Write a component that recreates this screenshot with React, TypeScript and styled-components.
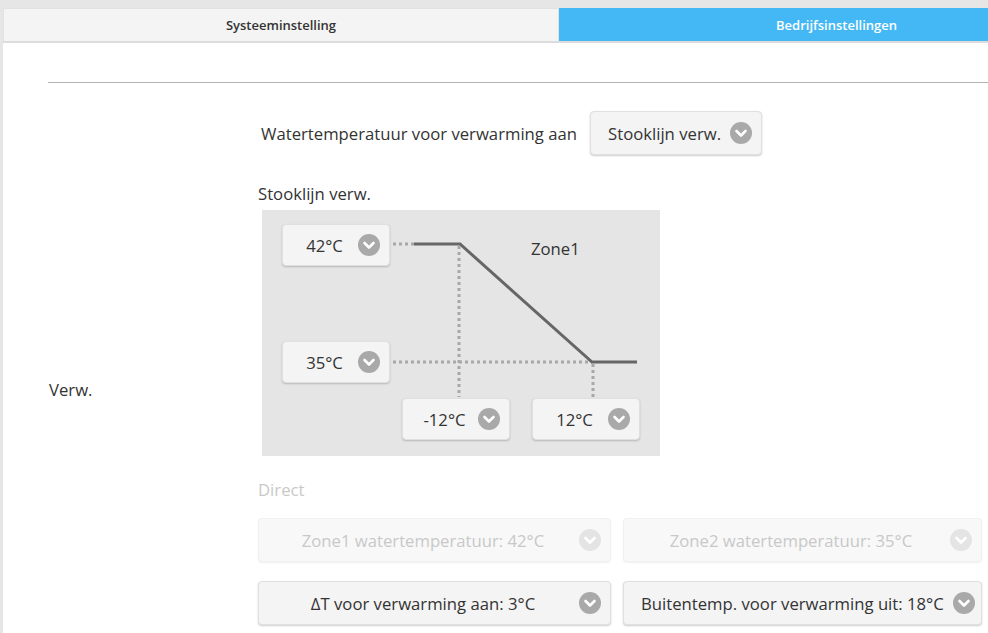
import React from 'react';
import styled, { createGlobalStyle } from 'styled-components';

const Global = createGlobalStyle`
  html, body { margin: 0; padding: 0; background: #e6e6e6; }
  body { font-family: "Open Sans", "Noto Sans", sans-serif; color: #333; font-size: 16.7px; }
  * { box-sizing: border-box; }
`;

const Frame = styled.div`
  height: 633px;
  padding: 8px 0 0 3px;
  overflow: hidden;
`;

const Panel = styled.div`
  background: #fff;
  height: 100%;
`;

const Tabs = styled.div`
  display: grid;
  grid-template-columns: 556px 555px;
  height: 35px;
  border-bottom: 2px solid #dcdcdc;
`;

const Tab = styled.div<{ $active?: boolean }>`
  display: flex;
  align-items: center;
  justify-content: center;
  font-size: 13px;
  font-weight: 600;
  color: ${p => (p.$active ? '#fff' : '#333')};
  background: ${p => (p.$active ? '#44b8f4' : '#f4f4f4')};
  border: ${p => (p.$active ? 'none' : '1px solid #e2e2e2')};
  border-bottom: none;
`;

const Rule = styled.hr`
  margin: 39px 0 0 45px;
  border: 0;
  border-top: 1px solid #b3b3b3;
  height: 0;
`;

const Main = styled.div`
  display: grid;
  grid-template-columns: 255px 1fr;
  margin-top: 28px;
`;

const SideLabel = styled.div`
  align-self: center;
  margin-top: 44px;
  padding-left: 46px;
  line-height: 22px;
`;

const Column = styled.div`
  display: flex;
  flex-direction: column;
  align-items: flex-start;
`;

const ModeRow = styled.div`
  display: flex;
  align-items: center;
  gap: 13px;
  padding-left: 3px;
`;

const Heading = styled.div<{ $muted?: boolean }>`
  margin-top: ${p => (p.$muted ? '23px' : '28px')};
  line-height: 22px;
  color: ${p => (p.$muted ? '#c9c9c9' : '#333')};
`;

const Select = styled.div<{ $w?: number; $h?: number; $disabled?: boolean }>`
  display: flex;
  align-items: center;
  height: ${p => p.$h ?? 42}px;
  ${p => (p.$w ? `width: ${p.$w}px;` : '')}
  padding: 0 9px 0 17px;
  gap: 9px;
  background: ${p => (p.$disabled ? '#f8f8f8' : '#f4f4f4')};
  border: 1px solid ${p => (p.$disabled ? '#f0f0f0' : '#e0e0e0')};
  border-radius: 4px;
  box-shadow: ${p => (p.$disabled ? '0 1px 2px rgba(0,0,0,0.06)' : '0 1px 2px rgba(0,0,0,0.2)')};
  color: ${p => (p.$disabled ? '#c8c8c8' : '#333')};
  white-space: nowrap;
`;

const SelectText = styled.span<{ $center?: boolean }>`
  flex: ${p => (p.$center ? 1 : 'none')};
  text-align: center;
`;

const Chart = styled.div`
  position: relative;
  margin: 5px 0 0 4px;
  width: 398px;
  height: 246px;
  background: #e5e5e5;
`;

const ChartLines = styled.svg`
  position: absolute;
  inset: 0;
`;

const Node = styled.div<{ $x: number; $y: number }>`
  position: absolute;
  left: ${p => p.$x}px;
  top: ${p => p.$y}px;
`;

const ZoneLabel = styled.div`
  position: absolute;
  left: 269px;
  top: 28px;
  line-height: 22px;
`;

const Grid = styled.div`
  display: grid;
  grid-template-columns: 353px 359px;
  column-gap: 12px;
  row-gap: 19px;
  margin-top: 17px;
`;

const Chevron = ({ disabled }: { disabled?: boolean }) => (
  <svg width="22" height="22" viewBox="0 0 22 22" style={{ flex: 'none' }}>
    <circle cx="11" cy="11" r="11" fill={disabled ? '#e4e4e4' : '#a9a9a9'} />
    <polyline points="6.5,9 11,13.5 15.5,9" fill="none" stroke="#fff" strokeWidth="2.6" strokeLinecap="round" strokeLinejoin="round" />
  </svg>
);

const TempSelect = ({ value }: { value: string }) => (
  <Select $w={108}>
    <SelectText $center>{value}</SelectText>
    <Chevron />
  </Select>
);

const WideSelect = ({ text, disabled }: { text: string; disabled?: boolean }) => (
  <Select $h={44} $disabled={disabled}>
    <SelectText $center>{text}</SelectText>
    <Chevron disabled={disabled} />
  </Select>
);

export default function App() {
  return (
    <>
      <Global />
      <Frame>
        <Panel>
          <Tabs>
            <Tab>Systeeminstelling</Tab>
            <Tab $active>Bedrijfsinstellingen</Tab>
          </Tabs>
          <Rule />
          <Main>
            <SideLabel>Verw.</SideLabel>
            <Column>
              <ModeRow>
                <span>Watertemperatuur voor verwarming aan</span>
                <Select $h={44}>
                  <SelectText>Stooklijn verw.</SelectText>
                  <Chevron />
                </Select>
              </ModeRow>
              <Heading>Stooklijn verw.</Heading>
              <Chart>
                <ChartLines width="398" height="246" viewBox="0 0 398 246">
                  <g stroke="#a8a8a8" strokeWidth="3" strokeDasharray="3 3" fill="none">
                    <line x1="131" y1="34" x2="152" y2="34" />
                    <line x1="197" y1="36" x2="197" y2="187" />
                    <line x1="131" y1="152" x2="330" y2="152" />
                    <line x1="331" y1="154" x2="331" y2="187" />
                  </g>
                  <polyline points="152,34 198,34 330,152 375,152" fill="none" stroke="#666" strokeWidth="3" />
                </ChartLines>
                <ZoneLabel>Zone1</ZoneLabel>
                <Node $x={20} $y={14}><TempSelect value="42°C" /></Node>
                <Node $x={20} $y={131}><TempSelect value="35°C" /></Node>
                <Node $x={140} $y={188}><TempSelect value="-12°C" /></Node>
                <Node $x={270} $y={188}><TempSelect value="12°C" /></Node>
              </Chart>
              <Heading $muted>Direct</Heading>
              <Grid>
                <WideSelect disabled text="Zone1 watertemperatuur: 42°C" />
                <WideSelect disabled text="Zone2 watertemperatuur: 35°C" />
                <WideSelect text="ΔT voor verwarming aan: 3°C" />
                <WideSelect text="Buitentemp. voor verwarming uit: 18°C" />
              </Grid>
            </Column>
          </Main>
        </Panel>
      </Frame>
    </>
  );
}
